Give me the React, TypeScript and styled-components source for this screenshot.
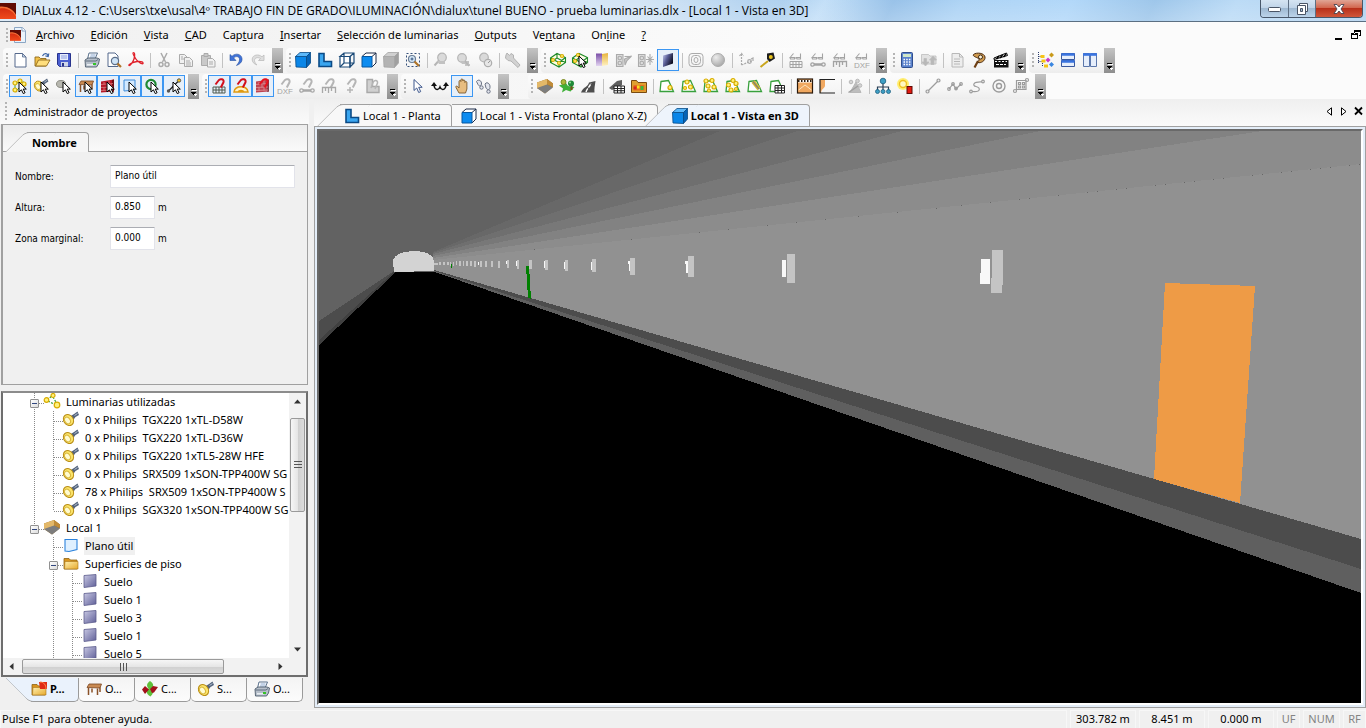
import React, { ReactNode } from "react";
import styled, { createGlobalStyle, css } from "styled-components";

const GlobalStyle = createGlobalStyle`
  *, *::before, *::after { box-sizing: border-box; }
  html, body { margin: 0; padding: 0; background: #f0f0f0; }
  body, button, input { font-family: "Noto Sans", "Open Sans", sans-serif; font-size: 11px; line-height: 16px; color: #000; }
  button { border: 0; padding: 0; background: none; }
  a { color: inherit; text-decoration: none; }
  ul { list-style: none; margin: 0; padding: 0; }
`;

/* ---------- icon drawings (16 x 16 grid) ---------- */

const Pointer = ({ x = 6, y = 4 }: { x?: number; y?: number }) => (
  <path
    transform={`translate(${x} ${y})`}
    d="M1 0v10l2.400-2.200 1.900 3.800 1.800-.9-1.900-3.600h3.100z"
    fill="#fff"
    stroke="#000"
    strokeWidth="1"
  />
);
const Magnet = ({ c = "#d3101c" }: { c?: string }) => (
  <path d="M4.500 6.500 7.500 2.500C9 .2 13.500 1 12.500 4.300L9.800 9.500" fill="none" stroke={c} strokeWidth="2" />
);
const Glasses = () => (
  <path d="M2 5.500h4.500v1.500h-4zM8.500 5.500h4v1.500H9zM2.500 5 5.500 1.500M12.500 5V1.500M6.500 6h2" fill="none" stroke="#a3a3a3" strokeWidth="1.100" />
);
const GridGlyph = ({ c, y = 9 }: { c: string; y?: number }) => (
  <path transform={`translate(0 ${y})`} d="M2 .5h12v6H2zM2 3.500h12M5 .5v6M8 .5v6M11 .5v6" fill="none" stroke={c} />
);
const BarGlyph = ({ c }: { c: string }) => (
  <g fill="none" stroke={c} strokeWidth="1.300">
    <path d="M4 13h8M4 12h8" />
    <circle cx="2.500" cy="12.500" r="1.700" />
    <circle cx="13.500" cy="12.500" r="1.700" />
  </g>
);
const RulerGlyph = ({ c }: { c: string }) => (
  <path d="M1.500 15V9.500h13V15M4.500 10v3M7.500 10v5M10.500 10v3" fill="none" stroke={c} strokeWidth="1.300" />
);
const DxfGlyph = () => (
  <text x="8" y="16" fontSize="8" textAnchor="middle" fill="#a3a3a3" fontFamily="Liberation Sans, sans-serif">DXF</text>
);
const Dot = ({ x, y, r = 2, c = "#fff27a", s = "#d9ac00" }: { x: number; y: number; r?: number; c?: string; s?: string }) => (
  <circle cx={x} cy={y} r={r} fill={c} stroke={s} strokeWidth="1.200" />
);
const Torch = () => (
  <>
    <path d="M7 5.500 11 3 14.500 .5l1.500 3.500-3.500 2L9.500 10z" fill="#54647c" />
    <path d="M11.500 4.500 14.500 2.500" stroke="#b4c0d2" />
    <ellipse cx="5.500" cy="9" rx="4.800" ry="5.800" transform="rotate(-35 5.500 9)" fill="#fbe46a" stroke="#b98d14" />
    <ellipse cx="4.500" cy="9.500" rx="2.600" ry="3.600" transform="rotate(-35 4.500 9.500)" fill="#fffbd0" stroke="#d9b63a" />
  </>
);
const Table = () => (
  <>
    <path d="M1 6.500 3 3h12.500L14 7z" fill="#c98a52" stroke="#7a4520" strokeWidth=".8" />
    <path d="M2.500 7v7M6 7.500v4M11.500 7.500V14M14 6.500V11" stroke="#8a5228" strokeWidth="1.500" />
  </>
);
const Bricks = () => (
  <>
    <path d="M1 3.500 14 1.500v12L1 14.500z" fill="#b51826" />
    <path d="M12 2l2-.5v12l-2 .2z" fill="#6d0d15" />
    <path d="M1 6.500l12-1M1 9.500l12-.5M1 12.500l12-.5M4 4v2.500M9 3v3M7 6.500v3M11 6v3M4 9.500v3M9 9.500v3" stroke="#e08a8a" strokeWidth=".7" />
  </>
);
const Room = () => (
  <>
    <path d="M0 4.500 10 1l6 4.500V9L8 15.500 0 10z" fill="#a27428" />
    <path d="M0 4.500 10 1v6L1 10.500 0 10z" fill="#e3b869" />
    <path d="M10 1l6 4.500V9l-6-2.500z" fill="#c08b38" />
    <path d="M0 10 10 6.500 16 9.500 8 15.500z" fill="#7d7d7d" />
  </>
);
const Folder = () => (
  <>
    <path d="M1 14V3.500h5L7.500 5H14v9z" fill="#d9951e" stroke="#8f6414" strokeWidth=".8" />
    <path d="M1.500 14 2 6.500h13V14z" fill="url(#folderFill)" stroke="#a87416" strokeWidth=".6" />
  </>
);
const Surface = () => <path d="M2 2.500 14 1.500v11.500L2 14.500z" fill="url(#surfaceFill)" stroke="#5b5b8c" strokeWidth=".8" />;
const Printer = () => (
  <>
    <path d="M5 1h8.500L11 7H3.500z" fill="#fff" stroke="#59708c" />
    <path d="M6.500 3h5M6 5h5" stroke="#6b8fc2" strokeWidth=".8" />
    <path d="M1 8l3-2h9l2.500 1-1 5-2 3H1.500z" fill="#b6bfca" stroke="#4d5b6b" strokeWidth=".9" />
    <path d="M1.500 9h10.500L14 7.500" fill="none" stroke="#5e6c7c" />
    <path d="M3 12.800h7" stroke="#eef2f6" strokeWidth="1.400" />
    <rect x="9" y="11" width="3" height="2" fill="#34c326" />
  </>
);
const CubeFaces = ({ a, b, c, s }: { a: string; b: string; c: string; s: string }) => (
  <g stroke={s} strokeWidth=".8" strokeLinejoin="round">
    <path d="M.5 4.500H11.500V15.500L1 15z" fill={a} />
    <path d="M.5 4.500 5 .5H15.500l-4 4z" fill={b} />
    <path d="M11.500 4.500 15.500 .5V11l-4 4.500z" fill={c} />
  </g>
);
const WireRoom = () => (
  <path d="M.5 6 7 1.500 15.500 5.500v5L9 15 .5 10.500zM.5 6l8.500 4.500 6.500-5M9 10.500V15M7 1.500v4.500l-6.500 4.500M7 6l8.500 4.500" fill="#fffde0" stroke="#1f8a28" strokeWidth="1.100" />
);
const Zone = () => <path d="M2 3.500 9.500 2.500 14.500 13.500H1z" fill="#fff" stroke="#38a03c" strokeWidth="1.300" />;
const GrayLens = () => (
  <>
    <circle cx="9" cy="5.500" r="4.300" fill="#dadada" stroke="#b5b5b5" strokeWidth="1.200" />
    <path d="M6 8.500 1.500 13.500" stroke="#b5b5b5" strokeWidth="2" />
  </>
);
const Logo = () => (
  <>
    <rect width="16" height="16" fill="url(#logoFill)" />
    <path d="M0 0h16v12C13 6 7 3 0 4z" fill="#5f0b04" />
    <path d="M0 3.500C7 3 13 6 16 12v1.500C12 7 6 4.500 0 5.500z" fill="#ff8a48" opacity=".7" />
  </>
);

const G = "#ababab";
const icons: Record<string, ReactNode> = {
  logo: <Logo />,
  doclogo: (<><path d="M4.500 .5h8l3 3v12h-11z" fill="#eaf3fb" stroke="#8ba6c4" /><path d="M12 .5V4h3.500" fill="#fff" stroke="#8ba6c4" /><g transform="translate(0 3) scale(.68)"><Logo /></g></>),
  new: (<><path d="M3 1.500h7.500L14 5v10H3z" fill="#fff" stroke="#55698c" /><path d="M10.500 1.500V5H14z" fill="#c5d4ea" stroke="#55698c" strokeWidth=".8" /></>),
  open: (<><path d="M1 14V5h4l1.500 1.500H12V14z" fill="#f3c24a" stroke="#8f6a1c" strokeWidth=".9" /><path d="M1.500 14 4.500 8H16l-3.500 6z" fill="#ffdf7e" stroke="#8f6a1c" strokeWidth=".9" /><path d="M8.500 4C10 1 13 1 14 3.500M14.800 1.500l-.6 3-2.800-.7" fill="none" stroke="#3d66a8" strokeWidth="1.200" /></>),
  save: (<><path d="M1.500 1.500h13v13h-11l-2-2z" fill="#4b5fd0" stroke="#28338c" /><rect x="4" y="2" width="8" height="6" fill="#e6ecfb" /><path d="M5 4h6M5 6h6" stroke="#8d9ee0" /><rect x="5" y="10" width="7" height="4.500" fill="#cfd6e8" /><rect x="6" y="11" width="2" height="3.500" fill="#28338c" /></>),
  print: <Printer />,
  preview: (<><path d="M2 1h7l3 3v10.500H2z" fill="#fff" stroke="#55698c" /><circle cx="9" cy="9" r="3.600" fill="#cfe4f8" stroke="#5c6f8a" strokeWidth="1.200" /><path d="M11.500 11.500 15 15" stroke="#b0752a" strokeWidth="2.200" /></>),
  pdf: (<path d="M5 1c2-1.500 2 3 1 6S2 14 1 13.500s3-3.500 8-4 6.500 1 6 2S9.500 10 7.500 6.500 4.500 1.500 5 1z" fill="none" stroke="#e0202a" strokeWidth="1.300" />),
  cut: (<g fill="none" stroke={G} strokeWidth="1.500"><path d="M5 1l4.500 9M11 1 6.500 10" /><circle cx="5" cy="12.500" r="2" /><circle cx="11" cy="12.500" r="2" /></g>),
  copy: (<g fill="#f1f1f1" stroke={G}><path d="M1.500 2.500h5l3 3v6h-8z" /><path d="M6.500 5.500h5l3 3v6h-8z" /><path d="M8 9h4M8 11h5M8 13h5M3 5h2M3 7h3" /></g>),
  paste: (<g fill="#c9c9c9" stroke={G}><path d="M1.500 3.500h9v10h-9z" /><path d="M4 1.500h4v3H4z" /><path d="M7.500 6.500h5l2.500 2.500v6H7.500z" fill="#f1f1f1" /><path d="M9 10h4M9 12h4" /></g>),
  undo: (<path d="M2 2.500v6h6L5.700 6C8 3.500 12 4.500 11.500 8c-.3 2.500-2 4-3 5.500 3-1 6-3.500 5.500-7C13.500 2 7.500.5 4 4.300z" fill="#3f72d8" stroke="#27509f" strokeWidth=".6" />),
  redo: (<path d="M14 3v5.500H8.500l2-2C8 5 4.500 5.500 4.500 8.500c0 2 1.500 3.500 2.500 4.500-3-1-5-3-4.800-6C2.500 3 8.500 1.500 12 4.800z" fill="#dedede" stroke="#bdbdbd" strokeWidth=".8" />),
  cube: <CubeFaces a="#0a86e8" b="#5bb8fa" c="#0462b6" s="#064a86" />,
  lshape: (<path d="M2 1.500h5v8h7.500v5H2z" fill="#3aa6f0" stroke="#0a4a86" strokeWidth="1.600" />),
  wire: (<g fill="#fff" stroke="#1b4a78" strokeWidth="1.200"><path d="M1 4.500h10V15H1z" /><path d="M1 4.500 5 1h10v10L11 15V4.500zM11 4.500 15 1M5 1v10h10M5 11l-4 4" fill="none" /></g>),
  front: (<><path d="M1 4.500 5 1h10v10L11 15" fill="#fff" stroke="#1b2a48" /><path d="M11 4.500 15 1" stroke="#1b2a48" /><path d="M1 4.500h10V15H1z" fill="#0d8cf0" stroke="#0657a0" /></>),
  graycube: <CubeFaces a="#b3b3b3" b="#d0d0d0" c="#a0a0a0" s="#a5a5a5" />,
  zoomsel: (<><path d="M1.500 1.500h13v13h-13z" fill="none" stroke="#35507a" strokeDasharray="2 2" /><circle cx="7" cy="7" r="3.500" fill="#d7eafa" stroke="#6a7c94" strokeWidth="1.200" /><path d="M5.500 7h3M7 5.500v3" stroke="#35507a" /><path d="M9.500 9.500 14 14" stroke="#b0752a" strokeWidth="2.200" /></>),
  lens1: (<><GrayLens /><path d="M4 9h8v3H6z" fill="#c2c2c2" /></>),
  lens2: (<><circle cx="7" cy="6" r="4.300" fill="#dadada" stroke="#b5b5b5" strokeWidth="1.200" /><path d="M5 9h9v3H7z" fill="#c2c2c2" /><path d="M10 9l4 5M10 13h5" stroke="#b5b5b5" strokeWidth="1.500" /></>),
  lens3: (<><circle cx="7" cy="5.500" r="4.300" fill="#dadada" stroke="#b5b5b5" strokeWidth="1.200" /><circle cx="11" cy="11" r="3.700" fill="#e6e6e6" stroke="#adadad" strokeWidth="1.200" /><path d="M11 11l2-2" stroke="#999" /></>),
  wrench: (<path d="M2 1 4.500 3.500l1.500-2 2.500 1.500V6l6.500 7-2 2.500L6 9 3 8.500.5 6 1 3z" fill="#d2d2d2" stroke="#b3b3b3" />),
  room3d: (<><WireRoom /><Dot x={3} y={8} r={1.500} /><Dot x={12} y={4} r={1.500} /><Dot x={9} y={11} r={1.500} /></>),
  room3dsel: (<><WireRoom /><Dot x={6} y={3} r={1.500} /><Dot x={3} y={9} r={1.500} /><Pointer x={6} y={4} /></>),
  gradient: (<><path d="M2 1.500h6v12.500H2z" fill="url(#violetFill)" /><path d="M8 2l6-1v12l-6 1z" fill="url(#amberFill)" /></>),
  filter1: (<g fill="none" stroke={G} strokeWidth="1.100"><path d="M.5 2.500H7v12H.5z" fill="#dcdcdc" /><circle cx="3.800" cy="6" r="1.800" /><circle cx="3.800" cy="11" r="1.800" /><path d="M15.500 4 11 8.500 9 13 8.500 7z" fill="#c8c8c8" /><path d="M8.500 4.500H15" /></g>),
  filter2: (<g fill="none" stroke={G} strokeWidth="1.100"><path d="M.5 2.500H7v12H.5z" fill="#dcdcdc" /><circle cx="3.800" cy="6" r="1.800" /><circle cx="3.800" cy="11" r="1.800" /><path d="M12 2v11M8 7.500h8M9.500 4.500l5 6M14.500 4.500l-5 6" /></g>),
  shade: <path d="M3 3.500 13 1v10.500L3 15z" fill="url(#shadeFill)" />,
  contour: (<g fill="none" stroke={G}><rect x="1" y="1.500" width="14" height="13" rx="3" /><rect x="3.500" y="3.500" width="9" height="9" rx="3" /><ellipse cx="8" cy="8" rx="2" ry="2.500" /></g>),
  sphere: <circle cx="8" cy="8" r="6.500" fill="url(#sphereFill)" stroke="#acacac" />,
  axes: (<g fill="none" stroke={G} strokeWidth="1.200"><path d="M3.500 13V2M1.500 4l2-2.500 2 2.500M3.500 13l10-4" strokeDasharray="2 1" /><circle cx="11.500" cy="9.500" r="1.800" /><path d="M13 7l2-1v3" /></g>),
  tape: (<><path d="M7 1.500 13.500 .5l1.500 6L9.500 10 7 7z" fill="#1d1d1d" /><circle cx="10.800" cy="5" r="2" fill="#e8c21c" /><path d="M.5 15 8 9" stroke="#c9a51c" strokeWidth="2" /></>),
  gl1: (<><Glasses /><GridGlyph c="#a3a3a3" /></>),
  gl2: (<><Glasses /><BarGlyph c="#a3a3a3" /></>),
  gl3: (<><Glasses /><RulerGlyph c="#a3a3a3" /></>),
  gl4: (<><Glasses /><DxfGlyph /></>),
  calc: (<><rect x="2.500" y=".5" width="11" height="15" rx="1" fill="#5b82cc" stroke="#304f8e" /><rect x="4" y="2" width="8" height="3" fill="#cfe6c8" /><path d="M4.500 7.500h8M4.500 10h8M4.500 12.500h8" stroke="#fff" strokeWidth="1.500" strokeDasharray="1.500 1.200" /></>),
  refresh: (<g fill="#e2e2e2" stroke="#bcbcbc" strokeWidth=".8"><path d="M.5 2.500h7l1.500 1.500h6v8H.5z" /><path d="M5.500 6.500H3V10H1l3.500 4L8 10H5.500zM10 12.500h3V8h2.500L12 4 8.500 8H10z" fill="#b8b8b8" /></g>),
  doc: (<g fill="#ededed" stroke="#b8b8b8"><path d="M3 1.500h7.500L14 5v10H3z" /><path d="M5 7h6M5 9.500h6M5 12h6M10.500 1.500V5H14" fill="none" /></g>),
  palette: (<><path d="M7 9 3.500 15.500" stroke="#6e3f14" strokeWidth="2.200" /><path d="M2.500 2.500c3-2.500 11-1.500 11.500 2.500S9.500 11.500 7 10.500c-1-1 2-2 1-3.500S1 4.500 2.500 2.500z" fill="#cf9a4e" stroke="#4a2a10" /><circle cx="9.500" cy="5" r="2" fill="#fff3da" stroke="#3a2a18" /></>),
  clapper: (<><path d="M1 6 13.500 1l1 2.500L1 7.500z" fill="#fff" stroke="#000" /><path d="M3.500 7 6 4M7 6l2.500-3M10.500 5 13 2" stroke="#000" strokeWidth="1.500" /><path d="M1 8h14.500v7.500H1z" fill="#111" /><path d="M2 9.500h12" stroke="#fff" strokeWidth="1.200" strokeDasharray="2 1.500" /><path d="M3 12.500h10" stroke="#fff" strokeDasharray="3 1" /></>),
  treeview: (<><path d="M.5 0v12M.5 4.500H3M.5 9.500H5M4.500 9v5.500" fill="none" stroke="#2b3b6b" strokeDasharray="1 1" /><path d="M2.500 3h4v3h-4zM3.500 7.500h4v3h-4zM6 12.500h4v3H6z" fill="#f6c416" /><path d="M13.500 .5 16 3l-2.500 2.500L11 3z" fill="#c99a1a" /><path d="M10 5.500 12.500 8 10 10.500 7.500 8z" fill="#c93ac9" /><path d="M13.500 10l2.500 2.500-2.500 2.500-2.500-2.500z" fill="#3a86e0" /></>),
  hsplit: (<g stroke="#39589e"><path d="M1.500 1.500h13v6h-13zM1.500 8.500h13v6h-13z" fill="#e6eefb" /><path d="M1.500 2.500h13M1.500 9.500h13" stroke="#3a74e0" strokeWidth="2.400" /></g>),
  vsplit: (<g stroke="#5b76aa"><path d="M1.500 1.500h6v13h-6zM8.500 1.500h6v13h-6z" fill="#e6eefb" /><path d="M1 2.500h14" stroke="#3a74e0" strokeWidth="2.600" /></g>),

  selLum: (<><path d="M3 6v7M4 5l8-1M4 13l6-6" stroke="#47a43a" /><Dot x={3} y={5} /><Dot x={8} y={3} /><Dot x={3} y={12} /><Dot x={12} y={6} /><Pointer /></>),
  selTorch: (<><g transform="scale(.9)"><Torch /></g><Pointer /></>),
  selGray: (<><ellipse cx="5" cy="6" rx="4.500" ry="3.500" fill="#b8b8b0" stroke="#8d8d85" /><path d="M8 8l4 3" stroke="#9a9a9a" strokeWidth="3" /><Pointer /></>),
  selTable: (<><Table /><Pointer /></>),
  selBrick: (<><Bricks /><Pointer /></>),
  selPlane: (<><path d="M2 2h11v10L2 13z" fill="#d3e9ff" stroke="#3c8ad8" /><Pointer /></>),
  selRing: (<><circle cx="7" cy="6.500" r="4.600" fill="none" stroke="#1f8a34" strokeWidth="2.200" /><Pointer /></>),
  selLine: (<><path d="M2 13.500 13 2.500" stroke="#222" strokeWidth="1.300" /><circle cx="13" cy="2.500" r="1.700" fill="#f6c416" stroke="#555" /><circle cx="2.500" cy="13" r="1.700" fill="#555" /><Pointer /></>),
  magGrid: (<><GridGlyph c="#4e5a4e" y={8.500} /><Magnet /></>),
  magArc: (<><path d="M1 14c1-7 13-7 14 0zM5 14c1-2 5-2 6 0" fill="#fff3c8" stroke="#e09a10" strokeWidth="1.500" /><Magnet /></>),
  magBrick: (<><g opacity=".8"><Bricks /></g><Magnet c="#e8101c" /></>),
  magDxf: (<><Magnet c="#b5b5b5" /><DxfGlyph /></>),
  magBar: (<><Magnet c="#b5b5b5" /><BarGlyph c="#a8a8a8" /></>),
  magRuler: (<><Magnet c="#b5b5b5" /><RulerGlyph c="#a8a8a8" /></>),
  magPlain: (<><Magnet c="#b5b5b5" /><path d="M7 9v6M4 12h6" stroke="#b5b5b5" strokeWidth="1.500" /></>),
  magL: (<><path d="M2 1.500h5.500v7H14v6H2z" fill="#d0d0d0" stroke="#a8a8a8" strokeWidth="1.400" /><path d="M6 10 8 4.500C9 1.500 13 2 12.500 5L10 11" stroke="#b5b5b5" strokeWidth="1.500" fill="none" /></>),
  arrow: <path d="M4 1.500v11l2.700-2.500 2 4.500 2-.9-2-4.300h3.500z" fill="#fff" stroke="#3c568c" />,
  swap: (<><path d="M2 7c.5 5 4.500 6 6 2 1.500 4 5.500 3 6-2" fill="none" stroke="#111" strokeWidth="1.500" /><path d="M-1 8 2 4l3 4zM11 8 14 4l3 4z" fill="#111" /></>),
  hand: (<path d="M4 15 1 9.500c-.6-1.500.8-2 1.600-1L4 10V3.500c0-1.400 1.900-1.400 1.900 0V2c0-1.500 2-1.500 2 0v1c0-1.500 2-1.400 2 0v1.500c0-1.400 2-1.300 2 0V11l-1.400 4z" fill="#e7bd80" stroke="#7c5a2c" strokeWidth=".9" transform="translate(1 0)" />),
  feet: (<g fill="#e3e6ee" stroke="#6b7385"><path d="M.5 3.500c2-3 5.500-.5 5 2.500S2.500 8 2 6.500z" /><circle cx="5.500" cy="9.500" r="1.700" /><path d="M9 6c2-3 5.500 0 5 3.500S11 11.500 10 10z" /><circle cx="12.500" cy="13.500" r="1.700" /></g>),
  room: <Room />,
  plants: (<><path d="M0 7.500 7 5l2 3 6.500 1-4 4.500L7 12l-4 2.500 1-4z" fill="#3fb038" /><circle cx="4.500" cy="4" r="2.500" fill="#b0b838" stroke="#7a8a20" /><path d="M12.500 8v4" stroke="#7a4a1c" strokeWidth="2" /><circle cx="12" cy="5.500" r="3" fill="#1f8a38" /><circle cx="11" cy="4.500" r="1" fill="#9be09a" /></>),
  road: (<><path d="M0 14.500C2 9 7 9 8 4.500L14.500 3C14 7 13 11 13.500 14.500z" fill="#4e4e4e" /><path d="M5 14c1-4 4-5 5-9" fill="none" stroke="#fff" strokeWidth="1.400" strokeDasharray="4 1" /></>),
  roadgrid: (<><path d="M0 10 8 3l5-1v5L3 12z" fill="#5f5f5f" /><path d="M5 8h10.500v7H5z" fill="#fff" stroke="#222" /><path d="M5 10.500h10.500M5 12.700h10.500M8.500 8v7M12 8v7" stroke="#222" /></>),
  foldercolor: (<><path d="M.5 14.500V2.500h5L7 4.500h8.500v10z" fill="#e0a030" stroke="#7a4a10" /><path d="M2.500 7h11v5.500h-11z" fill="#e8701e" /><path d="M2.500 8.500h3v3h-3z" fill="#d7261e" /><path d="M6 7.500h2.500v3H6z" fill="#f9e11c" /><path d="M9.500 8h3v4h-3z" fill="#3cba3c" /></>),
  z1: (<><Zone /><Dot x={11} y={9.500} /></>),
  z2: (<><Zone /><Dot x={6} y={4} /><Dot x={9.500} y={9} /><Dot x={4} y={10} r={1.500} /></>),
  z3: (<><Zone /><Dot x={3} y={3} /><Dot x={9} y={2.500} /><Dot x={5} y={8} /><Dot x={11} y={9} /><Dot x={6} y={12.500} r={1.500} /></>),
  z4: (<><Zone /><Dot x={8} y={2.500} /><Dot x={3.500} y={7} /><Dot x={11} y={5.500} /><Dot x={6} y={12} /><Dot x={11} y={11} r={1.500} /></>),
  z5: (<><Zone /><path d="M6 3.500 12 11" stroke="#d9b83a" strokeWidth="4" /><path d="M6 3.500 12 11" stroke="#8a8468" strokeWidth="1.500" /></>),
  z6: (<><Zone /><path d="M6 7.500h9.500V15H6z" fill="#fff" stroke="#222" /><path d="M6 10h9.500M6 12.500h9.500M9 7.500V15M12.500 7.500V15" stroke="#222" /></>),
  curtain: (<><rect x=".5" y="1" width="15" height="14" fill="#f0a860" stroke="#2b1a0c" strokeWidth="1.200" /><path d="M1 2h14v2.500H1z" fill="#fff" /><path d="M1 3h14" stroke="#2b1a0c" strokeWidth="2" strokeDasharray="1.500 1.500" /><path d="M1.500 12 8 7l6.500 5" fill="none" stroke="#fbe2bd" /></>),
  corner: (<><path d="M1 1.500h5v6C6 10 2 11 2 15H1z" fill="#f0a860" /><path d="M16 1.500H1V15h15" fill="none" stroke="#222" strokeWidth="1.200" /></>),
  grayperson: (<g fill="#d4d4d4" stroke="#b8b8b8"><path d="M3 14.500 9 4l5 10.500z" fill="#bdbdbd" /><circle cx="4" cy="4" r="1.800" /><circle cx="10.500" cy="3" r="1.800" /><circle cx="13" cy="7.500" r="1.800" /><path d="M1.500 14.500 11 8" stroke="#9f9f9f" strokeWidth="1.500" /></g>),
  hier: (<><path d="M8 4v5M2.500 12V9h11v3M8 9v3" fill="none" stroke="#2b3f55" strokeWidth="1.200" /><g fill="#3d9ec4" stroke="#1e5f80" strokeWidth=".8"><circle cx="8" cy="3" r="2.800" /><circle cx="2.500" cy="13.500" r="2" /><circle cx="8" cy="13.500" r="2" /><circle cx="13.500" cy="13.500" r="2" /></g></>),
  sunred: (<><circle cx="6" cy="6" r="6" fill="#ffee70" /><circle cx="6" cy="6" r="3.500" fill="#fff7c0" stroke="#f0c020" strokeWidth="1.400" /><rect x="10" y="8.500" width="5" height="7" fill="#e2190f" stroke="#5d0a06" /></>),
  ln1: (<g fill="#eee" stroke="#9c9c9c" strokeWidth="1.200"><path d="M3 13 13 3" /><circle cx="2.500" cy="13.500" r="1.500" /><circle cx="13.500" cy="2.500" r="1.500" /></g>),
  ln2: (<g fill="none" stroke="#9c9c9c" strokeWidth="1.200"><path d="M2 11 6 6l3 5 5-5" /><circle cx="2" cy="11" r="1.300" /><circle cx="6" cy="6" r="1.300" /><circle cx="9" cy="10.500" r="1.300" /><circle cx="14" cy="6" r="1.300" /></g>),
  ln3: (<g fill="none" stroke="#9c9c9c" strokeWidth="1.200"><path d="M3 13.500c10 1 8-4 4-5s-3-5 6-4.500" /><circle cx="2" cy="13.500" r="1.300" /><circle cx="14" cy="3.500" r="1.300" /></g>),
  ln4: (<g fill="none" stroke="#9c9c9c" strokeWidth="1.400"><circle cx="8" cy="8" r="6" /><circle cx="8" cy="8" r="2.500" /></g>),
  ln5: (<g fill="none" stroke="#9c9c9c" strokeWidth="1.200"><path d="M3.500 2.500H13v9H3.500zM5.500 4.500h2v2h-2zM9.500 4.500h2v2h-2zM5.500 8h2v2h-2zM9.500 8h2v2h-2z" /><circle cx="2" cy="13" r="1.500" /><circle cx="14" cy="2" r="1.500" /></g>),

  lumgroup: (<><path d="M3 7l5-4M4 8l8 4M9 4l4 7" stroke="#3aa03a" strokeWidth="1.300" strokeDasharray="2 1.500" /><Dot x={2.500} y={7} r={2.300} /><Dot x={9} y={2.500} /><Dot x={13} y={12} r={2.800} /></>),
  torch: <Torch />,
  plane: <path d="M2 2.500h12v10L6 14.500 2 14z" fill="#dff0ff" stroke="#2d83dc" strokeWidth="1.100" />,
  folder: <Folder />,
  surface: <Surface />,
  project: (<><Folder /><path d="M8 1h8v7H9z" fill="#e02a14" /><path d="M9 1c4 0 6 3 6 7" fill="none" stroke="#ff8a4a" /></>),
  table: <Table />,
  colors: (<><path d="M8 0c4 3 4 5 1.500 7.500C12 11 11 13 8.500 15.500 4 13 4 10 6.500 7.500 4 5 5 2 8 0z" fill="#5fbf3a" /><path d="M0 8.500 3 5l4 3.500L3 13zM8 8l3-3 5 1-4 5.500-2 .5z" fill="#a3101a" /></>),
};

const IconDefs = () => (
  <Defs aria-hidden="true">
    <defs>
      <linearGradient id="folderFill" x1="0" y1="0" x2="1" y2="1"><stop offset="0" stopColor="#fff0b0" /><stop offset="1" stopColor="#e6a92c" /></linearGradient>
      <linearGradient id="surfaceFill" x1="0" y1="0" x2="1" y2="1"><stop offset="0" stopColor="#c9c9e4" /><stop offset="1" stopColor="#5f5f98" /></linearGradient>
      <linearGradient id="shadeFill" x1="0" y1="0" x2="1" y2=".6"><stop offset="0" stopColor="#c9cff0" /><stop offset=".45" stopColor="#5a5f98" /><stop offset="1" stopColor="#0a0a1c" /></linearGradient>
      <linearGradient id="violetFill" x1="0" y1="0" x2="0" y2="1"><stop offset="0" stopColor="#7b4fa8" /><stop offset="1" stopColor="#e2d4f0" /></linearGradient>
      <linearGradient id="amberFill" x1="0" y1="0" x2="0" y2="1"><stop offset="0" stopColor="#e8b43c" /><stop offset="1" stopColor="#fff2c4" /></linearGradient>
      <linearGradient id="logoFill" x1="0" y1="0" x2="0" y2="1"><stop offset="0" stopColor="#c8200a" /><stop offset="1" stopColor="#f04a1c" /></linearGradient>
      <radialGradient id="sphereFill" cx=".35" cy=".3" r=".8"><stop offset="0" stopColor="#ececec" /><stop offset="1" stopColor="#a2a2a2" /></radialGradient>
    </defs>
  </Defs>
);

const Defs = styled.svg`
  position: absolute;
  width: 0;
  height: 0;
`;

const IconSvg = styled.svg`
  display: block;
  flex: none;
  overflow: visible;
`;

const Icon = ({ name, size = 16 }: { name: string; size?: number }) => (
  <IconSvg width={size} height={size} viewBox="0 0 16 16" aria-hidden="true">
    {icons[name]}
  </IconSvg>
);

/* ---------- window frame ---------- */

const Window = styled.div`
  display: flex;
  flex-direction: column;
  height: 100vh;
  min-height: 600px;
  background: #f0f0f0;
  overflow: hidden;
`;

const TitleBar = styled.header`
  display: flex;
  align-items: flex-start;
  height: 22px;
  flex: none;
  border-bottom: 1px solid #5b6f82;
  background:
    linear-gradient(180deg, rgba(255, 255, 255, 0.1), rgba(255, 255, 255, 0.25)),
    linear-gradient(90deg, #d3e5f5 0, #cfe2f4 640px, rgba(190, 216, 240, 0.4) 760px, transparent 860px),
    linear-gradient(115deg, #9cc6ec 0 57%, #bcdcf8 60%, #8dbbe6 65%, #a5cff4 70%, #a9d3f8 78%, #93c0e8 84%, #b4d7f5 90%, #a9cdee);
`;

const TitleText = styled.h1`
  display: flex;
  align-items: center;
  gap: 6px;
  flex: 1;
  min-width: 0;
  height: 21px;
  margin: 0;
  font-size: 12px;
  font-weight: 400;
  font-family: "Open Sans", sans-serif;
  white-space: nowrap;
`;

const WindowButtons = styled.div`
  display: flex;
  margin-right: 3px;
  border: 1px solid #48576a;
  border-top: 0;
  border-radius: 0 0 4px 4px;
  overflow: hidden;
`;

const WindowButton = styled.button<{ $close?: boolean }>`
  display: flex;
  align-items: center;
  justify-content: center;
  width: ${(p) => (p.$close ? 47 : 27)}px;
  height: 17px;
  border-left: 1px solid #5e6f83;
  background: ${(p) =>
    p.$close
      ? "linear-gradient(180deg, #e0a595 0, #d2674f 45%, #b8301a 50%, #d0573a 100%)"
      : "linear-gradient(180deg, #d5e4f2 0, #c0d4e8 45%, #9fb9d2 50%, #bcd4ea 100%)"};
  &:first-child { border-left: 0; }
`;

const MenuBar = styled.nav`
  display: flex;
  align-items: center;
  flex: none;
  height: 26px;
  padding-left: 6px;
  background: linear-gradient(90deg, #f0f0f0, #fbfbfb 60%);
`;

const MenuIcon = styled.span`
  margin: 0 2px 0 1px;
`;

const MenuItem = styled.a`
  padding: 0 8px;
  white-space: nowrap;
`;

const ChildButtons = styled.div`
  display: flex;
  gap: 7px;
  margin: 0 5px 0 auto;
`;

/* ---------- tool bars ---------- */

const Toolbars = styled.div`
  flex: none;
  display: grid;
  row-gap: 1px;
  background: linear-gradient(90deg, #efefef, #fbfbfb 60%);
`;

const ToolRow = styled.div`
  display: flex;
  gap: 3px;
  padding-left: 3px;
`;

const ToolGroup = styled.div<{ $far?: boolean }>`
  display: flex;
  align-items: flex-start;
  flex: none;
  height: 25px;
  margin-left: ${(p) => (p.$far ? 16 : 0)}px;
  padding-top: 1px;
  border-radius: 4px 0 0 4px;
  background: linear-gradient(180deg, #fcfcfc, #f6f6f6 60%, #ededed);
`;

const Grip = styled.span<{ $tall?: boolean }>`
  flex: none;
  width: 3px;
  height: ${(p) => (p.$tall ? 19 : 14)}px;
  background: repeating-linear-gradient(180deg, #b4b4b4 0 2px, transparent 2px 4px) 0 0 / 2px 100% no-repeat;
`;

const GroupGrip = styled(Grip)`
  margin: 4px 0 0 3px;
`;

const ToolButton = styled.button<{ $on?: boolean }>`
  display: flex;
  align-items: center;
  justify-content: center;
  flex: none;
  width: 22px;
  height: 22px;
  ${(p) => p.$on && css`
    border: 1px solid #3b96f2;
    background: #e6eff9;
  `}
`;

const Divider = styled.span`
  flex: none;
  width: 1px;
  height: 15px;
  margin: 4px 2px 0 3px;
  background: #c2c2c2;
`;

const Overflow = styled.button`
  display: flex;
  align-items: flex-end;
  justify-content: center;
  width: 11px;
  height: 25px;
  margin: -1px 0 0 3px;
  padding-bottom: 3px;
  background: linear-gradient(180deg, #c4c4c4, #8e8e8e);
`;

const OverflowMark = () => (
  <IconSvg width="6" height="7" viewBox="0 0 6 7" shapeRendering="crispEdges" aria-hidden="true">
    <path d="M1 1h5v1H1zM2 5h4L4 7z" fill="#fff" />
    <path d="M0 0h5v1H0zM0 3h5L2.500 6z" fill="#000" />
  </IconSvg>
);

type Group = { label: string; items: string[]; far?: boolean };

/* "|" is a divider and a leading "*" marks a pressed button */
const toolRows: Group[][] = [
  [
    { label: "Estándar", items: ["new", "open", "save", "|", "print", "preview", "pdf", "|", "cut", "copy", "paste", "|", "undo", "redo"] },
    { label: "Vistas", items: ["cube", "lshape", "wire", "front", "graycube", "zoomsel", "|", "lens1", "lens2", "lens3", "|", "wrench"] },
    { label: "Representación", items: ["room3d", "room3dsel", "gradient", "filter1", "filter2", "*shade", "|", "contour", "sphere", "|", "axes", "tape", "|", "gl1", "gl2", "gl3", "gl4"] },
    { label: "Cálculo", items: ["calc", "refresh", "|", "doc", "palette", "clapper"] },
    { label: "Ventanas", items: ["treeview", "hsplit", "vsplit"] },
  ],
  [
    { label: "Selección", items: ["*selLum", "selTorch", "selGray", "*selTable", "*selBrick", "*selPlane", "*selRing", "*selLine"] },
    { label: "Captura", items: ["*magGrid", "*magArc", "*magBrick", "magDxf", "magBar", "magRuler", "magPlain", "magL"] },
    { label: "Navegación", items: ["arrow", "swap", "*hand", "feet"] },
    { label: "Insertar", far: true, items: ["room", "plants", "road", "|", "roadgrid", "foldercolor", "|", "z1", "z2", "z3", "z4", "z5", "z6", "|", "curtain", "corner", "|", "grayperson", "|", "hier", "sunred", "|", "ln1", "ln2", "ln3", "ln4", "ln5"] },
  ],
];

const ToolItem = ({ item }: { item: string }) => {
  if (item === "|") return <Divider />;
  const on = item.startsWith("*");
  const name = on ? item.slice(1) : item;
  return (
    <ToolButton type="button" $on={on} aria-label={name} aria-pressed={on}>
      <Icon name={name} />
    </ToolButton>
  );
};

/* ---------- left panel ---------- */

const Workspace = styled.main`
  flex: 1;
  min-height: 0;
  display: grid;
  grid-template-columns: 309px minmax(0, 1fr);
  column-gap: 5px;
`;

const Side = styled.aside`
  display: flex;
  flex-direction: column;
  min-height: 0;
`;

const PanelTitle = styled.h2`
  display: flex;
  align-items: center;
  gap: 6px;
  flex: none;
  height: 25px;
  margin: 0;
  padding-left: 5px;
  font-size: 11px;
  font-weight: 400;
  background: linear-gradient(180deg, #f0f0f0, #fafafa);
`;

const Properties = styled.section`
  flex: none;
  height: 261px;
  margin: 0 1px;
  border: 1px solid #a0a0a0;
  border-left-width: 2px;
`;

const PropertyTabs = styled.div`
  display: flex;
  align-items: flex-end;
  height: 27px;
  padding-left: 24px;
  border-bottom: 1px solid #a0a0a0;
  background: linear-gradient(180deg, #ececec, #fafafa);
`;

const slant = css`
  &::before {
    content: "";
    position: absolute;
    z-index: -1;
    top: -1px;
    bottom: 0;
    left: -12px;
    width: 32px;
    border: 1px solid #a0a0a0;
    border-width: 1px 0 0 1px;
    border-top-left-radius: 5px;
    background: inherit;
    transform: skewX(-45deg);
  }
`;

const PropertyTab = styled.button`
  position: relative;
  z-index: 0;
  height: 20px;
  margin-bottom: -1px;
  padding: 0 11px 0 5px;
  border: 1px solid #a0a0a0;
  border-width: 1px 1px 0 0;
  border-radius: 0 4px 0 0;
  background: #f6f6f6;
  font-weight: 700;
  ${slant}
`;

const Form = styled.form`
  display: grid;
  grid-template-columns: 95px 1fr;
  row-gap: 8px;
  align-items: center;
  padding: 13px 12px 0 12px;
`;

const Label = styled.label`
  font-family: "DejaVu Sans Condensed", "DejaVu Sans", sans-serif;
  font-size: 10px;
`;

const Field = styled.div`
  display: flex;
  align-items: center;
  gap: 3px;
  font-family: "DejaVu Sans Condensed", "DejaVu Sans", sans-serif;
  font-size: 10px;
`;

const TextBox = styled.input<{ $short?: boolean }>`
  width: ${(p) => (p.$short ? "45px" : "100%")};
  height: 23px;
  padding: 0 4px 3px;
  border: 1px solid #e2e3ea;
  border-top-color: #abadb3;
  border-radius: 1px;
  background: #fff;
  outline: 0;
  font: inherit;
`;

const TreeFrame = styled.section`
  flex: 1;
  min-height: 0;
  display: grid;
  grid-template: minmax(0, 1fr) 17px / minmax(0, 1fr) 17px;
  margin: 6px 1px 0;
  border: 2px solid #6e6e6e;
  border-top-color: #8c8c8c;
  background: #fff;
`;

const TreeList = styled.ul`
  overflow: hidden;
`;

const TreeRow = styled.li`
  display: flex;
  height: 18px;
  padding-left: 22px;
  white-space: nowrap;
`;

const vDots = "repeating-linear-gradient(180deg, #8a8a8a 0 1px, transparent 1px 2px)";
const hDots = "repeating-linear-gradient(90deg, #8a8a8a 0 1px, transparent 1px 2px)";

/* vertical: full, upper half or none; stub: branch to the right */
const Guide = styled.span<{ $v?: "full" | "half"; $stub?: boolean }>`
  display: flex;
  align-items: center;
  flex: none;
  width: 19px;
  padding: 2px 0 0 5px;
  background:
    ${vDots} 9px 0 / 1px ${(p) => (p.$v === "full" ? "18px" : p.$v === "half" ? "10px" : "0")} no-repeat,
    ${hDots} 10px 10px / 10px ${(p) => (p.$stub ? "1px" : "0")} no-repeat;
`;

const Toggle = styled.button`
  display: flex;
  align-items: center;
  justify-content: center;
  width: 9px;
  height: 9px;
  border: 1px solid #919191;
  border-radius: 1px;
  background: linear-gradient(135deg, #fff, #dcdcdc);
  &::before { content: ""; width: 5px; height: 1px; background: #31477f; }
`;

const NodeText = styled.span<{ $on?: boolean }>`
  align-self: center;
  margin-left: 5px;
  padding: 0 2px 0 1px;
  line-height: 18px;
  white-space: pre;
  background: ${(p) => (p.$on ? "#f0f0f0" : "transparent")};
`;

const ScrollTrack = styled.div<{ $horizontal?: boolean }>`
  display: flex;
  flex-direction: ${(p) => (p.$horizontal ? "row" : "column")};
  background: #f2f2f2;
`;

const ScrollButton = styled.button`
  display: flex;
  align-items: center;
  justify-content: center;
  flex: none;
  width: 17px;
  height: 17px;
`;

const Thumb = styled.div<{ $horizontal?: boolean }>`
  display: flex;
  align-items: center;
  justify-content: center;
  flex: none;
  border: 1px solid #9a9a9a;
  border-radius: 2px;
  ${(p) =>
    p.$horizontal
      ? css`width: 202px; height: 15px; margin: 1px 2px; background: linear-gradient(180deg, #f6f6f6, #e6e6e6 50%, #cfcfcf 51%, #dcdcdc);`
      : css`width: 15px; height: 94px; margin: 8px 1px 0; background: linear-gradient(90deg, #f6f6f6, #e6e6e6 50%, #cfcfcf 51%, #dcdcdc);`}
`;

const Spring = styled.span`
  flex: 1;
`;

const Arrow = ({ turn }: { turn: number }) => (
  <IconSvg width="7" height="7" viewBox="0 0 7 7" aria-hidden="true">
    <path d="M0 5.500h7L3.500 1.500z" fill="#333" transform={`rotate(${turn} 3.500 3.500)`} />
  </IconSvg>
);

const ThumbMarks = ({ turn = 0 }: { turn?: number }) => (
  <IconSvg width="8" height="8" viewBox="0 0 8 8" aria-hidden="true">
    <path d="M0 .5h8M0 3.500h8M0 6.500h8" stroke="#555" transform={`rotate(${turn} 4 4)`} />
  </IconSvg>
);

const BottomTabs = styled.div`
  display: flex;
  flex: none;
  height: 31px;
  padding: 1px 0 5px 2px;
  margin: 0 1px;
`;

const BottomTab = styled.button<{ $on?: boolean }>`
  position: relative;
  display: flex;
  align-items: center;
  gap: 3px;
  flex: none;
  width: ${(p) => (p.$on ? 48 : 56)}px;
  height: 24px;
  margin-left: ${(p) => (p.$on ? 28 : 0)}px;
  padding: 0 0 2px ${(p) => (p.$on ? 0 : 7)}px;
  border: 1px solid #9a9a9a;
  border-width: 0 1px 1px 0;
  border-radius: 0 0 5px 5px;
  background: ${(p) => (p.$on ? "#eaf2fc" : "linear-gradient(180deg, #f4f4f4, #fcfcfc)")};
  font-weight: ${(p) => (p.$on ? 700 : 400)};
  ${(p) =>
    p.$on &&
    css`
      z-index: 0;
      border-bottom-left-radius: 0;
      &::before {
        content: "";
        position: absolute;
        z-index: -1;
        top: 0;
        bottom: -1px;
        left: -14px;
        width: 30px;
        border: 1px solid #9a9a9a;
        border-width: 0 0 1px 1px;
        border-bottom-left-radius: 5px;
        background: #eaf2fc;
        transform: skewX(45deg);
      }
    `}
`;

type Node = { text: string; icon: string; guides: string[]; on?: boolean };

/* guide codes: f full line, t full line with stub, l half line with stub, F/H toggle on a full/half line */
const nodes: Node[] = [
  { text: "Luminarias utilizadas", icon: "lumgroup", guides: ["F"] },
  { text: "0 x Philips  TGX220 1xTL-D58W", icon: "torch", guides: ["f", "t"] },
  { text: "0 x Philips  TGX220 1xTL-D36W", icon: "torch", guides: ["f", "t"] },
  { text: "0 x Philips  TGX220 1xTL5-28W HFE", icon: "torch", guides: ["f", "t"] },
  { text: "0 x Philips  SRX509 1xSON-TPP400W SG", icon: "torch", guides: ["f", "t"] },
  { text: "78 x Philips  SRX509 1xSON-TPP400W S", icon: "torch", guides: ["f", "t"] },
  { text: "0 x Philips  SGX320 1xSON-TPP400W SG", icon: "torch", guides: ["f", "l"] },
  { text: "Local 1", icon: "room", guides: ["H"] },
  { text: "Plano útil", icon: "plane", guides: ["", "t"], on: true },
  { text: "Superficies de piso", icon: "folder", guides: ["", "F"] },
  { text: "Suelo", icon: "surface", guides: ["", "f", "t"] },
  { text: "Suelo 1", icon: "surface", guides: ["", "f", "t"] },
  { text: "Suelo 3", icon: "surface", guides: ["", "f", "t"] },
  { text: "Suelo 1", icon: "surface", guides: ["", "f", "t"] },
  { text: "Suelo 5", icon: "surface", guides: ["", "f", "t"] },
];

const TreeGuide = ({ code }: { code: string }) => (
  <Guide
    $v={"ftF".includes(code) && code ? "full" : "lH".includes(code) && code ? "half" : undefined}
    $stub={!!code && code !== "f"}
  >
    {(code === "F" || code === "H") && <Toggle type="button" aria-label="Contraer" />}
  </Guide>
);

/* ---------- document area ---------- */

const Documents = styled.section`
  display: flex;
  flex-direction: column;
  min-width: 0;
  min-height: 0;
`;

const DocTabs = styled.div`
  display: flex;
  align-items: flex-end;
  flex: none;
  height: 27px;
  padding-left: 26px;
  background: linear-gradient(180deg, #efefef, #fafafa);
`;

const DocTab = styled.button<{ $on?: boolean; $slanted?: boolean }>`
  position: relative;
  z-index: 0;
  display: flex;
  align-items: center;
  gap: 3px;
  flex: none;
  height: 22px;
  padding: 0 10px 0 ${(p) => (p.$slanted ? 4 : 9)}px;
  margin-left: ${(p) => (p.$on ? 10 : 0)}px;
  border: 1px solid #a0a0a0;
  border-width: 1px 1px 0 0;
  border-radius: 0 4px 0 0;
  background: ${(p) => (p.$on ? "#eef4fc" : "#f8f8f8")};
  font-weight: ${(p) => (p.$on ? 700 : 400)};
  white-space: nowrap;
  ${(p) => p.$slanted && slant}
`;

const TabControls = styled.div`
  display: flex;
  align-items: center;
  gap: 7px;
  height: 24px;
  margin: 0 3px 0 auto;
  padding-bottom: 6px;
`;

const ViewFrame = styled.div`
  flex: 1;
  min-height: 0;
  display: flex;
  padding: 2px;
  border: 1px solid #a0a0a0;
  background: #e4eef9;
`;

const ViewInner = styled.div`
  flex: 1;
  display: flex;
  min-width: 0;
  min-height: 0;
  border: 2px solid #696969;
  border-right-color: #fff;
  border-bottom-color: #fff;
`;

const SceneSvg = styled.svg`
  display: block;
  flex: 1;
  min-width: 0;
  height: 100%;
`;

/* x, y, width, height of each lamp body, nearest last */
const lamps = [
  [434, 263, 4, 2], [439, 262, 2, 3], [443, 262, 2, 3], [447, 262, 2, 3], [450, 262, 1, 4], [453, 262, 1, 4], [456, 261, 1, 4], [459, 261, 2, 5],
  [463, 261, 1, 5], [466, 261, 2, 5], [470, 261, 2, 5], [474, 261, 2, 6], [480, 261, 2, 6], [485, 261, 2, 6],
  [491, 261, 2, 6], [498, 261, 2, 7], [507, 260, 2, 8], [517, 260, 2, 9], [529, 260, 3, 9],
  [545, 260, 3, 10], [565, 260, 3, 11], [592, 259, 4, 13], [630, 258, 5, 17], [688, 256, 6, 21],
  [787, 254, 8, 29],
];
const glows = [
  [478, 262, 1, 3], [506, 261, 1, 3], [516, 261, 1, 5], [544, 261, 1, 7], [564, 262, 1, 7], [591, 262, 1, 8],
  [628, 261, 2, 3], [629, 264, 1, 7], [685, 261, 3, 3], [686, 264, 2, 9], [782, 260, 4, 17],
  [981, 259, 9, 14], [980, 273, 10, 11],
];
const specks = [
  [534, 249], [631, 239], [699, 232], [728, 229], [767, 225], [796, 222], [825, 219], [858, 216], [897, 212], [936, 208], [961, 205],
  [990, 202], [1019, 199], [1029, 198], [1058, 195], [1087, 192], [1097, 191], [1116, 189], [1126, 188], [1155, 185], [1165, 184],
  [1184, 182], [1194, 181], [1213, 179], [1223, 178], [1252, 175], [1262, 174], [1281, 172], [1291, 171], [1310, 169], [1320, 168], [1330, 167], [1349, 165], [1359, 164],
];

const Scene = () => (
  <SceneSvg viewBox="319 131 1042 572" preserveAspectRatio="none" shapeRendering="crispEdges" role="img" aria-label="Vista en 3D del túnel">
    <rect x="319" y="131" width="1042" height="572" fill="#626262" />
    <path d="M433 252 720 131H1361V560L433 271z" fill="#686868" />
    <path d="M433 253 797 131H1361V560L433 271z" fill="#6f6f6f" />
    <path d="M433 254 902 131H1361V560L433 271z" fill="#787878" />
    <path d="M433 256 1040 131H1361V560L433 271z" fill="#828282" />
    <path d="M433 258 1262 131H1361V560L433 271z" fill="#8c8c8c" />
    <path d="M433 260 1361 164V560L433 271z" fill="#919191" />
    {specks.map(([x, y]) => <rect key={x} x={x} y={y} width="1" height="1" fill="#666" />)}
    <path d="M394 271 319 321V346L396 272z" fill="#4c4c4c" />
    <path d="M395 271 319 340V346L396 272z" fill="#404040" />
    <path d="M434 270 1361 539V596L434 272z" fill="#4c4c4c" />
    <path d="M434 271 1361 569V594L434 272z" fill="#5f5f5f" />
    <path d="M396 272H435L1361 593V703H319V345z" fill="#000" />
    <path d="M394 272V268L393 267V260C394 256 400 253 405 252 410 251 420 251 424 252 430 254 434 257 434 261V271z" fill="#d3d3d3" />
    {lamps.map(([x, y, w, h]) => <rect key={x} x={x} y={y} width={w} height={h} fill="#c4c4c4" />)}
    {glows.map(([x, y, w, h]) => <rect key={x} x={x} y={y} width={w} height={h} fill="#f8f8f8" />)}
    <path d="M992 250h11v28l-1 15h-11v-15l1-1z" fill="#c4c4c4" />
    <path d="M526 266h3l2 33-3-1z" fill="#008000" />
    <rect x="451" y="264" width="1" height="4" fill="#008000" />
    <path d="M1165 283 1255 286 1240 503 1154 479z" fill="#ee9b46" />
  </SceneSvg>
);

/* ---------- status bar ---------- */

const StatusBar = styled.footer`
  display: flex;
  align-items: stretch;
  flex: none;
  gap: 3px;
  height: 20px;
  padding-top: 2px;
`;

const StatusCell = styled.span<{ $w?: number; $muted?: boolean }>`
  flex: ${(p) => (p.$w ? "none" : "1")};
  width: ${(p) => (p.$w ? `${p.$w}px` : "auto")};
  padding: 0 1px;
  border: 1px solid #f7f7f7;
  border-bottom: 0;
  line-height: 16px;
  text-align: ${(p) => (p.$w ? "center" : "left")};
  color: ${(p) => (p.$muted ? "#838383" : "#000")};
`;

/* ---------- page ---------- */

const menus: [string, string, string][] = [
  ["", "A", "rchivo"], ["", "E", "dición"], ["", "V", "ista"], ["", "C", "AD"], ["Cap", "t", "ura"], ["", "I", "nsertar"],
  ["", "S", "elección de luminarias"], ["", "O", "utputs"], ["Ve", "n", "tana"], ["On", "l", "ine"], ["", "?", ""],
];

export default function App() {
  return (
    <Window>
      <GlobalStyle />
      <IconDefs />
      <TitleBar>
        <TitleText>
          <Icon name="logo" />
          DIALux 4.12 - C:\Users\txe\usal\4º TRABAJO FIN DE GRADO\ILUMINACIÓN\dialux\tunel BUENO - prueba luminarias.dlx - [Local 1 - Vista en 3D]
        </TitleText>
        <WindowButtons>
          <WindowButton type="button" aria-label="Minimizar">
            <IconSvg width="13" height="6" viewBox="0 0 13 6"><rect x=".5" y="1.500" width="12" height="4" rx="1" fill="#fff" stroke="#4a5566" /></IconSvg>
          </WindowButton>
          <WindowButton type="button" aria-label="Restaurar">
            <IconSvg width="13" height="12" viewBox="0 0 13 12"><path d="M3.500.5h8v8h-8z" fill="#fff" stroke="#4a5566" /><path d="M1.500 2.500h8v9h-8z" fill="#fff" stroke="#4a5566" /><path d="M4.500 5.500h2v3h-2z" fill="#9fb9d2" stroke="#4a5566" /></IconSvg>
          </WindowButton>
          <WindowButton type="button" $close aria-label="Cerrar">
            <IconSvg width="12" height="10" viewBox="0 0 12 10"><path d="M1 .5h3L6 3l2-2.500h3L8 5l3 4.500H8L6 7 4 9.500H1L4 5z" fill="#fff" stroke="#4a4450" strokeWidth=".9" /></IconSvg>
          </WindowButton>
        </WindowButtons>
      </TitleBar>

      <MenuBar>
        <Grip />
        <MenuIcon><Icon name="doclogo" /></MenuIcon>
        {menus.map(([a, key, b]) => (
          <MenuItem href="#" key={a + key + b}>{a}<u>{key}</u>{b}</MenuItem>
        ))}
        <ChildButtons>
          <button type="button" aria-label="Minimizar documento">
            <IconSvg width="10" height="10" viewBox="0 0 10 10"><path d="M1 8h7v2H1z" fill="#000" /></IconSvg>
          </button>
          <button type="button" aria-label="Restaurar documento">
            <IconSvg width="10" height="10" viewBox="0 0 10 10" shapeRendering="crispEdges"><path d="M3 0h7v6H8V5h1V2H4v2H3zM0 3h7v6H0zM1 5v3h5V5z" fill="#000" fillRule="evenodd" /></IconSvg>
          </button>
        </ChildButtons>
      </MenuBar>

      <Toolbars>
        {toolRows.map((row, r) => (
          <ToolRow key={r}>
            {row.map((group) => (
              <ToolGroup key={group.label} $far={group.far} role="toolbar" aria-label={group.label}>
                <GroupGrip />
                {group.items.map((item, i) => <ToolItem key={i} item={item} />)}
                <Overflow type="button" aria-label="Más botones"><OverflowMark /></Overflow>
              </ToolGroup>
            ))}
          </ToolRow>
        ))}
      </Toolbars>

      <Workspace>
        <Side>
          <PanelTitle><Grip $tall />Administrador de proyectos</PanelTitle>
          <Properties>
            <PropertyTabs><PropertyTab type="button">Nombre</PropertyTab></PropertyTabs>
            <Form>
              <Label htmlFor="nombre">Nombre:</Label>
              <Field><TextBox id="nombre" defaultValue="Plano útil" /></Field>
              <Label htmlFor="altura">Altura:</Label>
              <Field><TextBox id="altura" $short defaultValue="0.850" />m</Field>
              <Label htmlFor="zona">Zona marginal:</Label>
              <Field><TextBox id="zona" $short defaultValue="0.000" />m</Field>
            </Form>
          </Properties>
          <TreeFrame>
            <TreeList>
              {nodes.map((node, i) => (
                <TreeRow key={i}>
                  {node.guides.map((code, g) => <TreeGuide key={g} code={code} />)}
                  <Icon name={node.icon} />
                  <NodeText $on={node.on}>{node.text}</NodeText>
                </TreeRow>
              ))}
            </TreeList>
            <ScrollTrack>
              <ScrollButton type="button" aria-label="Subir"><Arrow turn={0} /></ScrollButton>
              <Thumb><ThumbMarks /></Thumb>
              <Spring />
              <ScrollButton type="button" aria-label="Bajar"><Arrow turn={180} /></ScrollButton>
            </ScrollTrack>
            <ScrollTrack $horizontal>
              <ScrollButton type="button" aria-label="Izquierda"><Arrow turn={-90} /></ScrollButton>
              <Thumb $horizontal><ThumbMarks turn={90} /></Thumb>
              <Spring />
              <ScrollButton type="button" aria-label="Derecha"><Arrow turn={90} /></ScrollButton>
            </ScrollTrack>
            <ScrollTrack />
          </TreeFrame>
          <BottomTabs>
            <BottomTab type="button" $on><Icon name="project" />P...</BottomTab>
            <BottomTab type="button"><Icon name="table" />O...</BottomTab>
            <BottomTab type="button"><Icon name="colors" />C...</BottomTab>
            <BottomTab type="button"><Icon name="torch" />S...</BottomTab>
            <BottomTab type="button"><Icon name="print" />O...</BottomTab>
          </BottomTabs>
        </Side>

        <Documents>
          <DocTabs>
            <DocTab type="button" $slanted><Icon name="lshape" />Local 1 - Planta</DocTab>
            <DocTab type="button"><Icon name="front" />Local 1 - Vista Frontal (plano X-Z)</DocTab>
            <DocTab type="button" $on $slanted><Icon name="cube" />Local 1 - Vista en 3D</DocTab>
            <TabControls>
              <button type="button" aria-label="Pestaña anterior">
                <IconSvg width="7" height="9" viewBox="0 0 7 9"><path d="M5.500.8v7.400L1 4.500z" fill="#fff" stroke="#000" /></IconSvg>
              </button>
              <button type="button" aria-label="Pestaña siguiente">
                <IconSvg width="7" height="9" viewBox="0 0 7 9"><path d="M1.500.8v7.400L6 4.500z" fill="#fff" stroke="#000" /></IconSvg>
              </button>
              <button type="button" aria-label="Cerrar pestaña">
                <IconSvg width="9" height="8" viewBox="0 0 9 8"><path d="M1 .5l7 7M8 .5l-7 7" stroke="#000" strokeWidth="1.800" /></IconSvg>
              </button>
            </TabControls>
          </DocTabs>
          <ViewFrame><ViewInner><Scene /></ViewInner></ViewFrame>
        </Documents>
      </Workspace>

      <StatusBar>
        <StatusCell>Pulse F1 para obtener ayuda.</StatusCell>
        <StatusCell $w={66}>303.782 m</StatusCell>
        <StatusCell $w={66}>8.451 m</StatusCell>
        <StatusCell $w={66}>0.000 m</StatusCell>
        <StatusCell $w={23} $muted>UF</StatusCell>
        <StatusCell $w={37} $muted>NUM</StatusCell>
        <StatusCell $w={23} $muted>RF</StatusCell>
      </StatusBar>
    </Window>
  );
}
